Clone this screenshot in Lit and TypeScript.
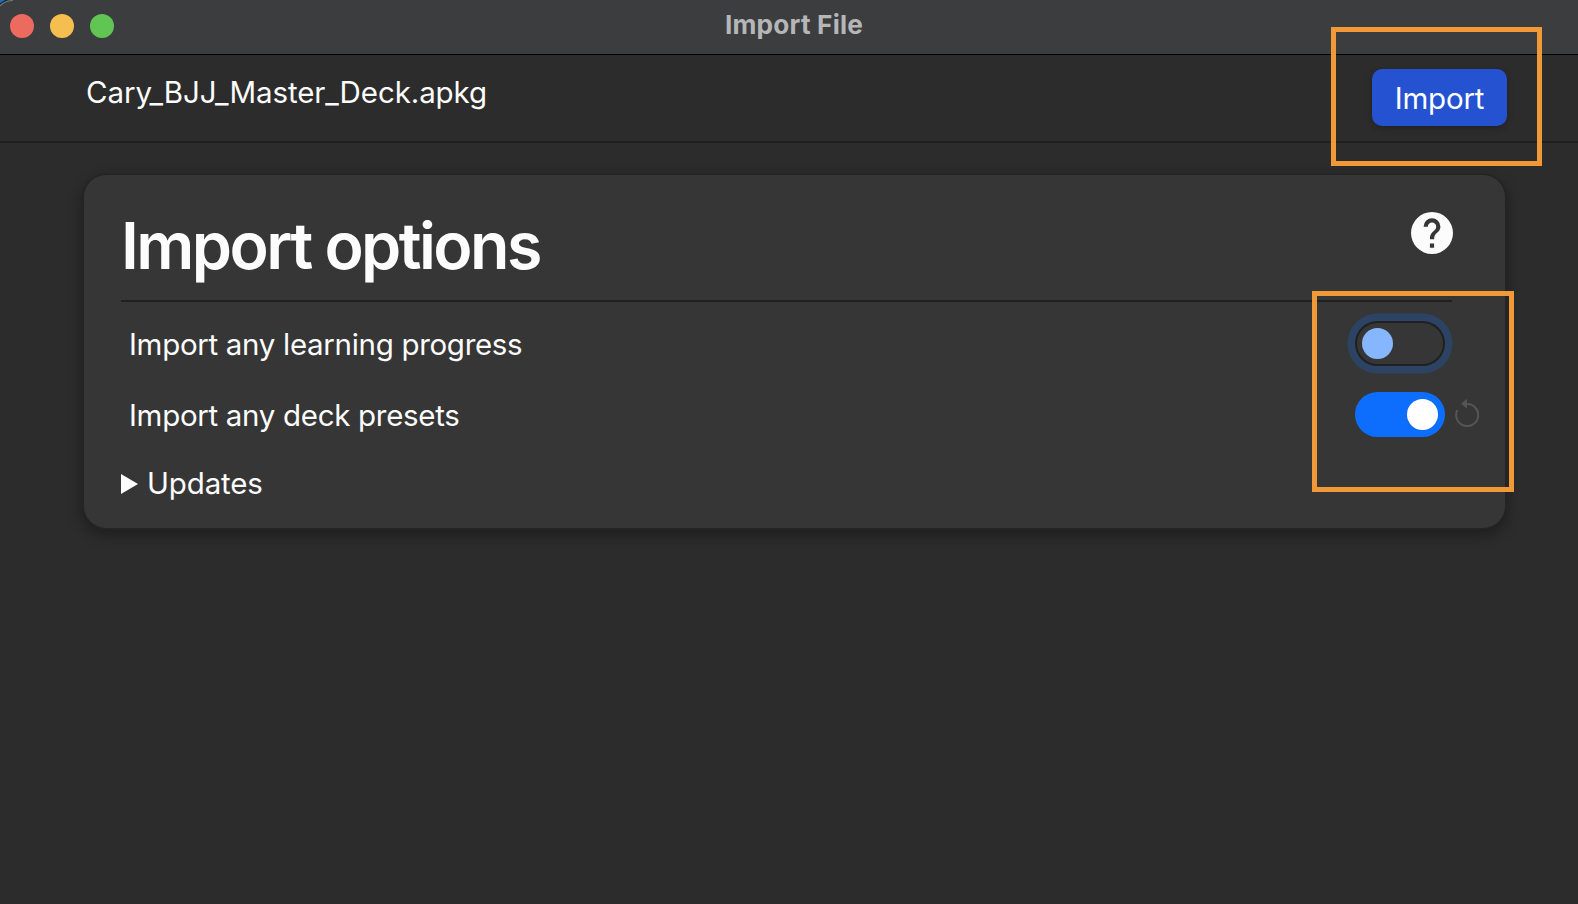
import { LitElement, html, css } from "lit";
import { customElement, property } from "lit/decorators.js";

@customElement("toggle-switch")
class ToggleSwitch extends LitElement {
  @property({ type: Boolean, reflect: true }) on = false;

  static styles = css`
    :host { display: block; }
    .track { box-sizing: border-box; width: 90px; height: 45px; border-radius: 23px; border: 2px solid #202020; padding: 5px; display: flex; align-items: center; background: #363636; box-shadow: 0 0 0 7.5px #2c4364; }
    .knob { width: 31px; height: 31px; border-radius: 50%; background: #86b7fe; }
    :host([on]) .track { background: #0d6efd; border-color: #0d6efd; box-shadow: none; justify-content: flex-end; }
    :host([on]) .knob { background: #fff; }
  `;

  render() {
    return html`<div class="track"><div class="knob"></div></div>`;
  }
}

@customElement("app-root")
class AppRoot extends LitElement {
  static styles = css`
    :host { display: block; position: relative; width: 1578px; height: 904px; overflow: hidden; background: #2c2c2c; color: #fcfcfc; font-family: Inter, "Liberation Sans", sans-serif; font-size: 29.5px; }
    * { box-sizing: border-box; }
    .titlebar { display: grid; grid-template-columns: 1fr auto 1fr; height: 55px; padding: 0 10px; background: #3c3d3f; border-bottom: 1px solid #000; }
    .lights { display: flex; gap: 16px; padding-top: 14px; }
    .light { width: 24px; height: 24px; border-radius: 50%; }
    .red { background: #ed6a5f; }
    .yellow { background: #f5bf4f; }
    .green { background: #61c554; }
    .title { margin: 0; padding: 9px 0 0 10px; font-size: 26.2px; line-height: 32px; font-weight: 700; letter-spacing: 0.2px; color: #b5b6b7; }
    .corner { position: absolute; left: 0; top: 0; width: 20px; height: 20px; display: block; }
    .toolbar { display: flex; justify-content: space-between; align-items: flex-start; height: 88px; padding: 14px 71px 0 86px; border-bottom: 2px solid #202020; }
    .file { padding-top: 5px; line-height: 36px; white-space: nowrap; letter-spacing: -0.1px; }
    .import { width: 135px; height: 57px; padding: 1px 0 0; border: 0; border-radius: 10px; background: #2552d0; color: #fff; font: inherit; letter-spacing: -0.2px; box-shadow: 0 2px 6px #0004; }
    .card { margin: 32px 73px 0 84px; height: 353px; padding: 31px 53px 0 37px; border-radius: 22px; background: #363636; box-shadow: 0 0 0 1.5px #242424, 0 5px 14px 2px #0005; }
    .head { display: flex; justify-content: space-between; height: 96px; border-bottom: 2px solid #202020; }
    h1 { margin: 0; font-size: 64.5px; line-height: 78px; font-weight: 600; letter-spacing: -2.55px; white-space: nowrap; padding-top: 1px; }
    .help { width: 42px; height: 42px; margin: 6px -1px 0 0; display: block; }
    .row { display: flex; align-items: center; height: 71px; padding: 0 7px; }
    .row.first { margin-top: 6px; }
    .label { flex: 1; line-height: 36px; white-space: nowrap; letter-spacing: -0.31px; padding-left: 1px; }
    .row .reset { width: 24px; height: 30px; margin: -4px -34px 0 10px; display: block; }
    .updates { display: flex; align-items: center; height: 36px; margin-top: 15px; letter-spacing: -0.15px; }
    .arrow { width: 17px; height: 20px; margin: 1px 9px 0 0; }
    .mark { position: absolute; border: 5px solid #f09936; }
    .mark.action { left: 1331px; top: 27px; width: 211px; height: 139px; }
    .mark.toggles { left: 1312px; top: 291px; width: 202px; height: 201px; }
  `;

  render() {
    return html`
      <header class="titlebar">
        <div class="lights">
          <span class="light red"></span><span class="light yellow"></span><span class="light green"></span>
        </div>
        <p class="title">Import File</p>
      </header>
      <svg class="corner" viewBox="0 0 20 20">
        <path d="M0 0H11Q4 1 0 6Z" fill="#172b43" />
        <path d="M0 0H5L0 3Z" fill="#286bb5" />
        <path d="M0 6Q4 1 13 .5" fill="none" stroke="#747679" stroke-width="1.2" />
      </svg>
      <div class="toolbar">
        <span class="file">Cary_BJJ_Master_Deck.apkg</span>
        <button class="import">Import</button>
      </div>
      <main class="card">
        <div class="head">
          <h1>Import options</h1>
          <svg class="help" viewBox="2 2 20 20" fill="#fcfcfc">
            <path d="M15.07 11.25l-.9.92C13.45 12.89 13 13.5 13 15h-2v-.5c0-1.11.45-2.11 1.17-2.83l1.24-1.26c.37-.36.59-.86.59-1.41a2 2 0 0 0-4 0H8a4 4 0 0 1 8 0c0 .88-.36 1.67-.93 2.25M13 19h-2v-2h2M12 2a10 10 0 1 0 0 20 10 10 0 0 0 0-20z" />
          </svg>
        </div>
        <div class="row first">
          <span class="label">Import any learning progress</span>
          <toggle-switch></toggle-switch>
        </div>
        <div class="row">
          <span class="label">Import any deck presets</span>
          <toggle-switch on></toggle-switch>
          <svg class="reset" viewBox="0 0 24 30">
            <path d="M2.3 12.1A11 11 0 1 0 12 6" fill="none" stroke="#555" stroke-width="2" />
            <path d="M12 .8V10.5L6.2 5.8Z" fill="#555" />
          </svg>
        </div>
        <div class="updates">
          <svg class="arrow" viewBox="0 0 17 20"><path d="M0 0L17 10L0 20Z" fill="#fcfcfc" /></svg>
          <span>Updates</span>
        </div>
      </main>
      <div class="mark action"></div>
      <div class="mark toggles"></div>
    `;
  }
}
